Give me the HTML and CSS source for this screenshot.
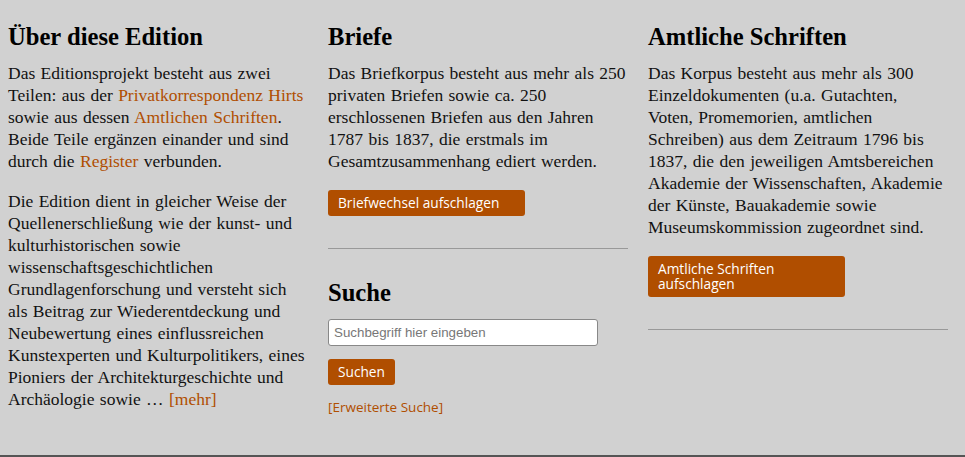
FILE: index.html
```html
<!DOCTYPE html>
<html lang="de">
<head>
<meta charset="utf-8">
<title>Edition</title>
<link rel="stylesheet" href="styles.css">
</head>
<body>
<div class="page">
  <div class="columns">
    <section class="col">
      <h2>Über diese Edition</h2>
      <p>Das Editionsprojekt besteht aus zwei Teilen: aus der <a href="#">Privatkorrespondenz Hirts</a> sowie aus dessen <a href="#">Amtlichen Schriften</a>. Beide Teile ergänzen einander und sind durch die <a href="#">Register</a> verbunden.</p>
      <p>Die Edition dient in gleicher Weise der Quellenerschließung wie der kunst- und kulturhistorischen sowie wissenschaftsgeschichtlichen Grundlagenforschung und versteht sich als Beitrag zur Wiederentdeckung und Neubewertung eines einflussreichen Kunstexperten und Kulturpolitikers, eines Pioniers der Architekturgeschichte und Archäologie sowie … <a href="#">[mehr]</a></p>
    </section>
    <section class="col">
      <h2>Briefe</h2>
      <p>Das Briefkorpus besteht aus mehr als 250 privaten Briefen sowie ca. 250 erschlossenen Briefen aus den Jahren 1787 bis 1837, die erstmals im Gesamtzusammenhang ediert werden.</p>
      <a class="btn btn-wide" href="#">Briefwechsel aufschlagen</a>
      <hr class="rule">
      <h2 class="search-title">Suche</h2>
      <form class="search">
        <input class="search-input" type="text" placeholder="Suchbegriff hier eingeben">
        <button class="btn" type="button">Suchen</button>
        <a class="adv" href="#">[Erweiterte Suche]</a>
      </form>
    </section>
    <section class="col">
      <h2>Amtliche Schriften</h2>
      <p class="narrow">Das Korpus besteht aus mehr als 300 Einzeldokumenten (u.a. Gutachten, Voten, Promemorien, amtlichen Schreiben) aus dem Zeitraum 1796 bis 1837, die den jeweiligen Amtsbereichen Akademie der Wissenschaften, Akademie der Künste, Bauakademie sowie Museumskommission zugeordnet sind.</p>
      <a class="btn btn-wide" href="#">Amtliche Schriften aufschlagen</a>
      <hr class="rule">
    </section>
  </div>
</div>
</body>
</html>
```

FILE: styles.css
```css
html, body {
  margin: 0;
  padding: 0;
  background: #d1d1d1;
}
body {
  font-family: "Liberation Serif", "Times New Roman", serif;
  font-size: 17.5px;
  line-height: 22px;
  word-spacing: 1px;
  color: #111;
}
.page {
  height: 455px;
  border-bottom: 2px solid #555;
  overflow: hidden;
}
.columns {
  display: grid;
  grid-template-columns: 300px 300px 300px;
  column-gap: 20px;
  padding: 0 8px;
  align-items: start;
}
.col h2 {
  font-size: 24.6px;
  line-height: 30px;
  font-weight: bold;
  margin: 22px 0 10px;
  color: #000;
  word-spacing: 0;
}
.col p {
  margin: 0 0 18px;
}
.col .narrow {
  max-width: 295px;
}
a {
  color: #b04e00;
  text-decoration: none;
}
.btn {
  display: inline-block;
  box-sizing: border-box;
  background: #b04e00;
  color: #fff;
  font-family: "Open Sans", "Noto Sans", sans-serif;
  font-size: 13.7px;
  line-height: 15px;
  word-spacing: 0;
  padding: 5px 10px 6px;
  border: 0;
  border-radius: 3px;
  text-align: left;
  cursor: pointer;
}
.btn-wide {
  width: 197px;
}
.rule {
  border: 0;
  border-top: 1px solid #999;
  margin: 32px 0 0;
}
.col .search-title {
  padding-top: 7px;
  margin-bottom: 11px;
}
.search {
  display: flex;
  flex-direction: column;
  align-items: flex-start;
}
.search-input {
  box-sizing: border-box;
  width: 270px;
  height: 27px;
  border: 1px solid #888;
  border-radius: 3px;
  padding: 2px 5px;
  font-family: "Liberation Sans", Arial, sans-serif;
  font-size: 13.33px;
  word-spacing: 0;
  background: #fff;
  margin: 0 0 13px;
}
.search-input::placeholder {
  color: #777;
}
.search .btn {
  height: 26px;
}
.adv {
  font-family: "Open Sans", "Noto Sans", sans-serif;
  font-size: 13.5px;
  line-height: 18px;
  word-spacing: 0;
  margin-top: 13px;
}
```
